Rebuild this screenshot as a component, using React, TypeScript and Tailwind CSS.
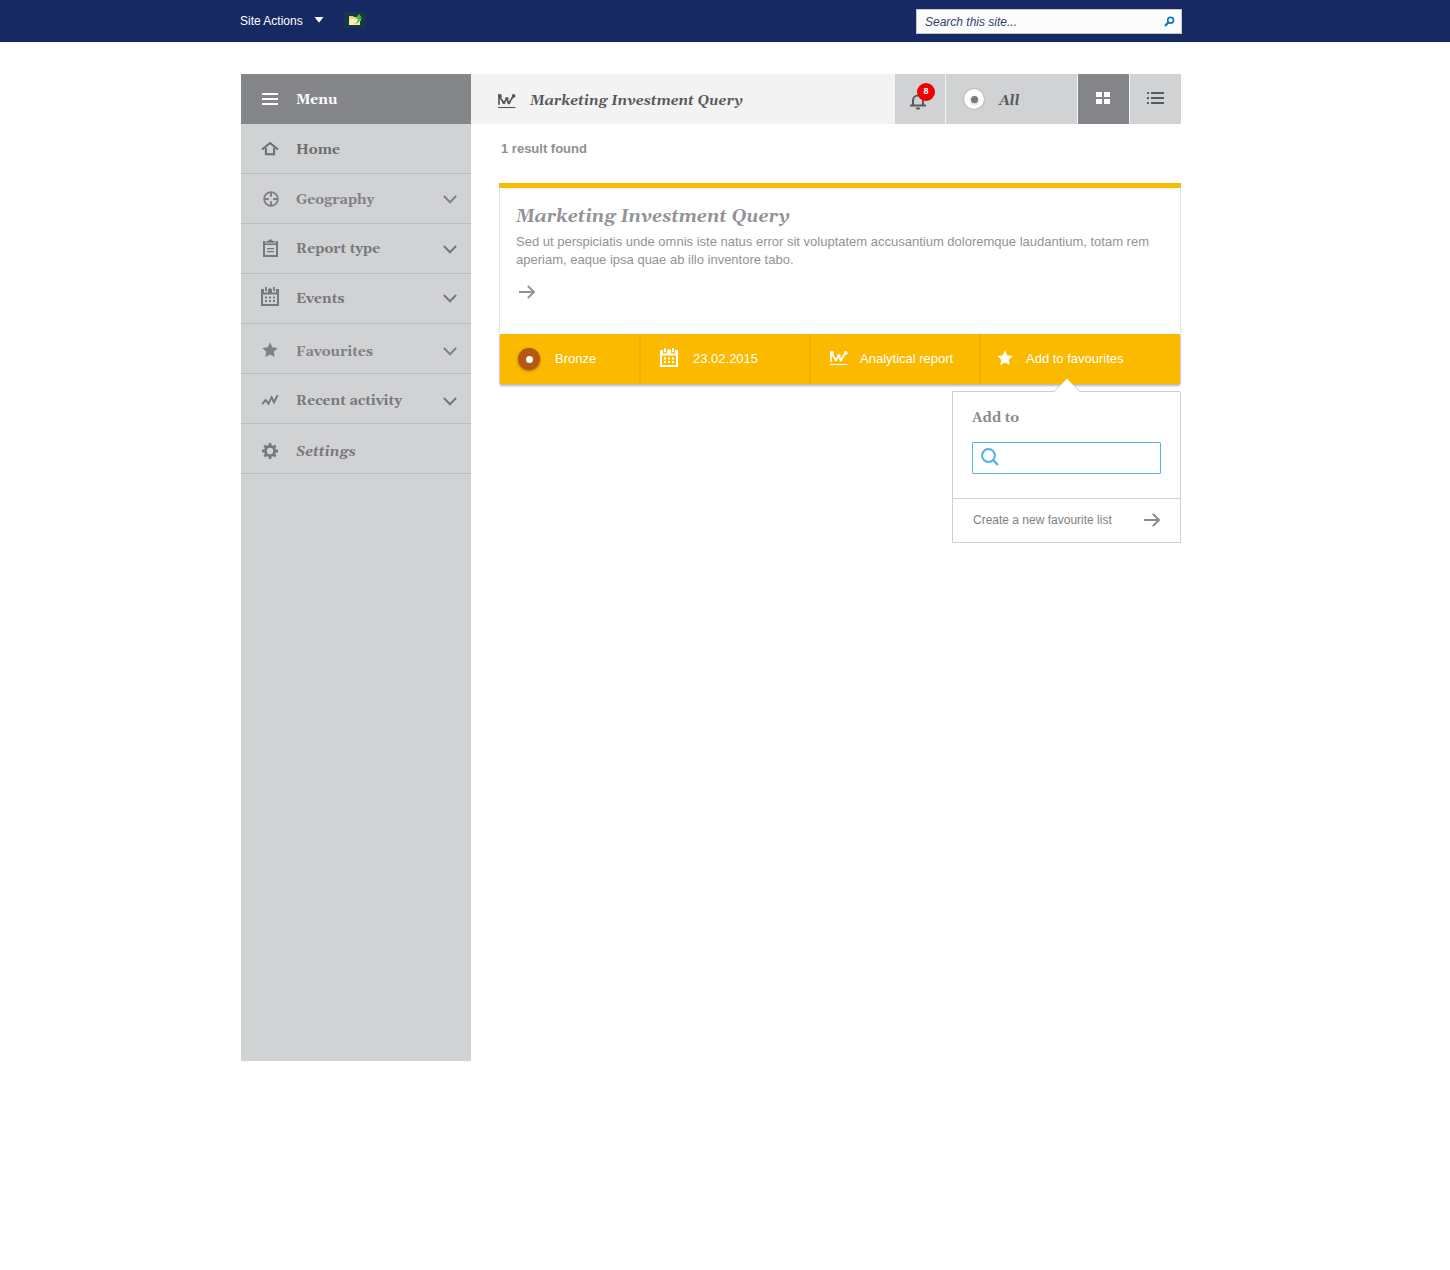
import React from "react";

const SERIF = "whitespace-nowrap font-[Georgia,Gelasio,'Liberation_Serif',serif] font-bold";

type IconProps = { className?: string };

function HomeIcon() {
  return (
    <svg width="18" height="16" viewBox="0 0 18 16" fill="none" stroke="currentColor" strokeWidth="2">
      <path d="M1 8.6 9 2l8 6.6" />
      <path d="M4.9 7v6.2h8.2V7" />
    </svg>
  );
}

function GeographyIcon() {
  return (
    <svg width="18" height="18" viewBox="0 0 18 18" fill="none" stroke="currentColor" strokeWidth="1.8">
      <circle cx="10" cy="9" r="6.900" />
      <path d="M10 2v4.800M10 11.200V16M3 9h4.800M12.200 9H17" strokeWidth="2" />
    </svg>
  );
}

function ReportIcon() {
  return (
    <svg width="18" height="20" viewBox="0 0 18 20" fill="currentColor">
      <path fillRule="evenodd" d="M2 3h2.500v2.500h10V3H17v16H2zM4 7v10h11V7z" />
      <path d="M5.500 4.800V3h1.700a2.400 2.400 0 0 1 4.600 0h1.700v1.800z" />
      <path d="M6 10h7v1.200H6zM6 13h7v1.200H6z" />
    </svg>
  );
}

function CalendarIcon({ className }: IconProps) {
  return (
    <svg width="18" height="19" viewBox="0 0 18 19" fill="currentColor" className={className}>
      <path fillRule="evenodd" d="M0 2h3v3.500h4V2h4v3.500h4V2h3v17H0zM2 7.500V17h14V7.500z" />
      <path d="M4.100 0h1.800v4.300H4.100zM12.100 0h1.800v4.300h-1.800zM8.300 1h1.400v2H8.300z" />
      <path d="M4 9.500h2v2H4zM8 9.500h2v2H8zM12 9.500h2v2h-2zM4 13h2v2H4zM8 13h2v2H8zM12 13h2v2h-2z" />
    </svg>
  );
}

function StarIcon() {
  return (
    <svg width="16" height="16" viewBox="0 0 16 16" fill="currentColor">
      <path d="M8 .3l2.300 4.900 5.400.7-4 3.800 1 5.400L8 12.500l-4.700 2.600 1-5.400-4-3.800 5.400-.7z" />
    </svg>
  );
}

function ActivityIcon() {
  return (
    <svg width="18" height="12" viewBox="0 0 18 12" fill="none" stroke="currentColor" strokeWidth="2">
      <path d="M1.200 10.200 4.600 6l2.800 3.600 3.200-6.200 2.400 4.800 3.600-7" />
    </svg>
  );
}

function GearIcon() {
  return (
    <svg width="18" height="18" viewBox="0 0 18 18" fill="none" stroke="currentColor">
      <circle cx="9" cy="9" r="4.600" strokeWidth="2.800" />
      <path
        d="M9 1v3M9 14v3M1 9h3M14 9h3M3.400 3.400l2 2M12.600 12.600l2 2M14.600 3.400l-2 2M5.400 12.600l-2 2"
        strokeWidth="2.800"
      />
    </svg>
  );
}

function ChartIcon() {
  return (
    <svg width="18" height="16" viewBox="0 0 18 16" fill="none" stroke="currentColor">
      <path d="M1 11.800V3L5.800 9.800l3-4 2 4.400L15.400 3" strokeWidth="1.700" />
      <g fill="currentColor" stroke="none">
        <circle cx="2" cy="2.900" r="1.900" />
        <circle cx="5.900" cy="9.500" r="1.600" />
        <circle cx="8.900" cy="5.600" r="1.700" />
        <circle cx="10.900" cy="9.500" r="1.600" />
        <circle cx="15.600" cy="2.900" r="1.900" />
      </g>
      <path d="M0 14.500h17.500" strokeWidth="1.100" />
    </svg>
  );
}

function Chevron() {
  return (
    <svg width="14" height="9" viewBox="0 0 14 9" fill="none" stroke="currentColor" strokeWidth="2">
      <path d="M.9 1 7 7.200 13.100 1" />
    </svg>
  );
}

function ArrowRight({ className }: IconProps) {
  return (
    <svg width="18" height="14" viewBox="0 0 18 14" fill="none" stroke="currentColor" strokeWidth="2" className={className}>
      <path d="M1 7h15.400M9.800 .9 16 7l-6.200 6.100" />
    </svg>
  );
}

const menu = [
  { label: "Home", icon: <HomeIcon />, text: "pt-0.5", iconPad: "pb-0", color: "text-[#6c6d6f]", chevron: "" },
  { label: "Geography", icon: <GeographyIcon />, text: "pt-0.5", iconPad: "pt-0", color: "text-[#808184]", chevron: "pt-0.5" },
  { label: "Report type", icon: <ReportIcon />, text: "", iconPad: "pb-0.5", color: "text-[#77787b]", chevron: "pt-0.5" },
  { label: "Events", icon: <CalendarIcon />, text: "", iconPad: "pb-1", color: "text-[#77787b]", chevron: "pt-0" },
  { label: "Favourites", icon: <StarIcon />, text: "pt-1.5", iconPad: "pt-0.5", color: "text-[#808184]", chevron: "pt-1.5" },
  { label: "Recent activity", icon: <ActivityIcon />, text: "pt-1", iconPad: "pt-0.5", color: "text-[#77787b]", chevron: "pt-1.5" },
  { label: "Settings", icon: <GearIcon />, text: "italic pt-1.5", iconPad: "pt-1", color: "text-[#77787b]", chevron: "" },
];

function TopBar() {
  return (
    <header className="flex h-[42px] items-center bg-[#172963] pl-[240px] pr-[268px]">
      <span className="text-xs text-white">Site Actions</span>
      <svg width="10" height="6" viewBox="0 0 10 6" className="ml-[11px] mb-0.5" fill="#fff">
        <path d="M.5 0h9L5 5.800z" />
      </svg>
      <div className="ml-5 mb-0.5 flex h-4 w-[22px] items-center justify-center bg-[#17374a]">
        <svg width="16" height="14" viewBox="0 0 16 14">
          <path d="M2 3h4l1 1h6v8H2z" fill="#e8d583" />
          <path d="M3 6h11l-2 6H2z" fill="#fbf0b0" />
          <path d="M6.500 10.500c3 .5 4.500-1.500 4.300-5H8.600L12 .8l3.400 4.700H13c0 3.500-2.800 6-6.500 5z" fill="#43b52e" />
        </svg>
      </div>
      <div className="ml-auto mt-px flex h-[25px] w-[266px] items-center justify-between border border-[#c3c6cf] bg-[#fcfcfd] pl-2 pr-1.5">
        <span className="text-xs italic text-[#33416f]">Search this site...</span>
        <svg width="11" height="11" viewBox="0 0 11 11" fill="none" stroke="#0f7ac4">
          <circle cx="6.600" cy="4.200" r="2.900" strokeWidth="1.700" />
          <path d="M4.500 6.400 1 9.900" strokeWidth="2.200" />
        </svg>
      </div>
    </header>
  );
}

function Sidebar() {
  return (
    <nav className="h-[987px] w-[230px] shrink-0 bg-[#d1d2d4]">
      <div className="flex h-[50px] items-center bg-[#858689] text-white">
        <svg width="16" height="12" viewBox="0 0 16 12" className="ml-[21px]" fill="#fff">
          <path d="M0 0h16v2H0zM0 5h16v2H0zM0 10h16v2H0z" />
        </svg>
        <span className={SERIF + " ml-[18px] pt-0.5 text-sm leading-5"}>Menu</span>
      </div>
      {menu.map((m) => (
        <div key={m.label} className={"flex h-[50px] items-center border-b border-[#bbbcbe] pl-5 pr-3.5 " + m.color}>
          <span className={"flex w-[18px] justify-center " + m.iconPad}>{m.icon}</span>
          <span className={SERIF + " ml-[17px] text-sm leading-5 " + m.text}>{m.label}</span>
          {m.chevron && (
            <span className={"ml-auto " + m.chevron}>
              <Chevron />
            </span>
          )}
        </div>
      ))}
    </nav>
  );
}

function Toolbar() {
  return (
    <div className="flex h-[50px] gap-px bg-[#f3f3f3] text-[#58595b]">
      <div className="flex w-[423px] items-center pl-[27px]">
        <span className="pt-1"><ChartIcon /></span>
        <h1 className={SERIF + " ml-3.5 pt-1 text-sm italic leading-5"}>Marketing Investment Query</h1>
      </div>
      <div className="relative w-[50px] bg-[#d1d2d4]">
        <svg width="16" height="17" viewBox="0 0 16 17" className="ml-[15px] mt-[19px]" fill="none" stroke="currentColor">
          <path d="M3 12.500V7.500a5 5 0 0 1 10 0v5" strokeWidth="2" />
          <path d="M0 12.500h16" strokeWidth="2" />
          <path d="M5.800 14.500h4.400a2.200 2.200 0 0 1-4.400 0z" fill="currentColor" stroke="none" />
        </svg>
        <span className="absolute left-[22px] top-[9px] flex h-[18px] w-[18px] items-center justify-center rounded-full bg-[#ee0000] text-[9px] font-bold text-white">
          8
        </span>
      </div>
      <div className="flex w-[131px] items-center bg-[#d1d2d4] pl-[18px]">
        <span className="flex h-5 w-5 items-center justify-center rounded-full bg-white shadow-[0_0_2px_rgba(0,0,0,0.35)]">
          <span className="h-[7px] w-[7px] rounded-full bg-[#77787b] shadow-[0_1px_3px_rgba(0,0,0,0.3)]" />
        </span>
        <span className={SERIF + " ml-[15px] pt-1 text-sm italic leading-5"}>All</span>
      </div>
      <div className="flex w-[51px] items-center justify-center bg-[#858689] pr-px">
        <svg width="14" height="12" viewBox="0 0 14 12" className="mb-0.5" fill="#fff">
          <path d="M0 0h6v5H0zM8 0h6v5H8zM0 7h6v5H0zM8 7h6v5H8z" />
        </svg>
      </div>
      <div className="flex w-[51px] items-center justify-center bg-[#d1d2d4]">
        <svg width="17" height="12" viewBox="0 0 17 12" className="mb-0.5" fill="currentColor">
          <path d="M0 0h2v2H0zM4 0h13v2H4zM0 5h2v2H0zM4 5h13v2H4zM0 10h2v2H0zM4 10h13v2H4z" />
        </svg>
      </div>
    </div>
  );
}

function Popover() {
  return (
    <div className="absolute right-[-1px] top-[57px] h-[152px] w-[229px] rounded-[1px] border border-[#cfcfd1] bg-white text-[#8a8b8e]">
      <svg width="28" height="15" viewBox="0 0 28 15" className="absolute left-[100px] top-[-14px]">
        <path d="M1.500 14 14 .5 26.500 14v1h-25z" fill="#fff" />
        <path d="M1 13.500 6.500 8M27 13.500 21.500 8" stroke="#cfcfd1" fill="none" />
      </svg>
      <div className="flex h-[107px] flex-col items-start border-b border-[#cfcfd1] pl-[19px] pt-4">
        <h3 className={SERIF + " text-sm leading-5"}>Add to</h3>
        <div className="mt-3.5 flex h-8 w-[189px] items-center rounded-[1px] border border-[#56b5e0] pb-0.5 pl-2">
          <svg width="18" height="18" viewBox="0 0 18 18" fill="none" stroke="#4db3e3">
            <circle cx="7.500" cy="7.500" r="6.400" strokeWidth="2" />
            <path d="m12 12 5 5" strokeWidth="2.300" />
          </svg>
        </div>
      </div>
      <div className="flex h-[43px] items-center justify-between pb-0.5 pl-5 pr-[19px]">
        <span className="text-xs text-[#808184]">Create a new favourite list</span>
        <ArrowRight />
      </div>
    </div>
  );
}

function ResultCard() {
  return (
    <article className="mt-[25px] w-[682px] border-x border-[#e3e3e4]">
      <div className="-mx-px h-[5px] bg-[#fbba00]" />
      <div className="h-[146px] pl-4 pt-[17px] text-[#929396]">
        <h2 className={SERIF + " text-lg italic leading-6"}>Marketing Investment Query</h2>
        <p className="mt-1 w-[650px] text-[13px] leading-[18px]">
          Sed ut perspiciatis unde omnis iste natus error sit voluptatem accusantium doloremque laudantium, totam rem
          aperiam, eaque ipsa quae ab illo inventore tabo.
        </p>
        <ArrowRight className="ml-0.5 mt-4" />
      </div>
      <div className="flex h-[50px] bg-[#fbba00] text-[13px] text-white shadow-[0_2px_2px_rgba(0,0,0,0.28)]">
        <div className="flex w-[141px] items-center border-r-2 border-[#eeaf03] pl-[18px]">
          <span className="flex h-[22px] w-[22px] items-center justify-center rounded-full bg-[#b65716] shadow-[0_1px_3px_rgba(90,40,0,0.5)]">
            <span className="h-[7px] w-[7px] rounded-full bg-white" />
          </span>
          <span className="ml-[15px]">Bronze</span>
        </div>
        <div className="flex w-[170px] items-center border-r-2 border-[#eeaf03] pl-[19px]">
          <CalendarIcon className="mb-1" />
          <span className="ml-[15px]">23.02.2015</span>
        </div>
        <div className="flex w-[170px] items-center border-r-2 border-[#eeaf03] pl-[19px]">
          <span className="pb-0.5"><ChartIcon /></span>
          <span className="ml-3">Analytical report</span>
        </div>
        <div className="relative flex flex-1 items-center pl-4">
          <span className="pb-0.5"><StarIcon /></span>
          <span className="ml-[13px]">Add to favourites</span>
          <Popover />
        </div>
      </div>
    </article>
  );
}

export default function App() {
  return (
    <div className="h-[1270px] w-[1450px] bg-white font-['Liberation_Sans',Arial,sans-serif]">
      <TopBar />
      <div className="ml-[241px] mt-8 flex w-[940px]">
        <Sidebar />
        <main className="w-[710px]">
          <Toolbar />
          <div className="pl-7">
            <p className="ml-0.5 mt-4 text-[13px] font-bold leading-[18px] text-[#8f9093]">1 result found</p>
            <ResultCard />
          </div>
        </main>
      </div>
    </div>
  );
}
